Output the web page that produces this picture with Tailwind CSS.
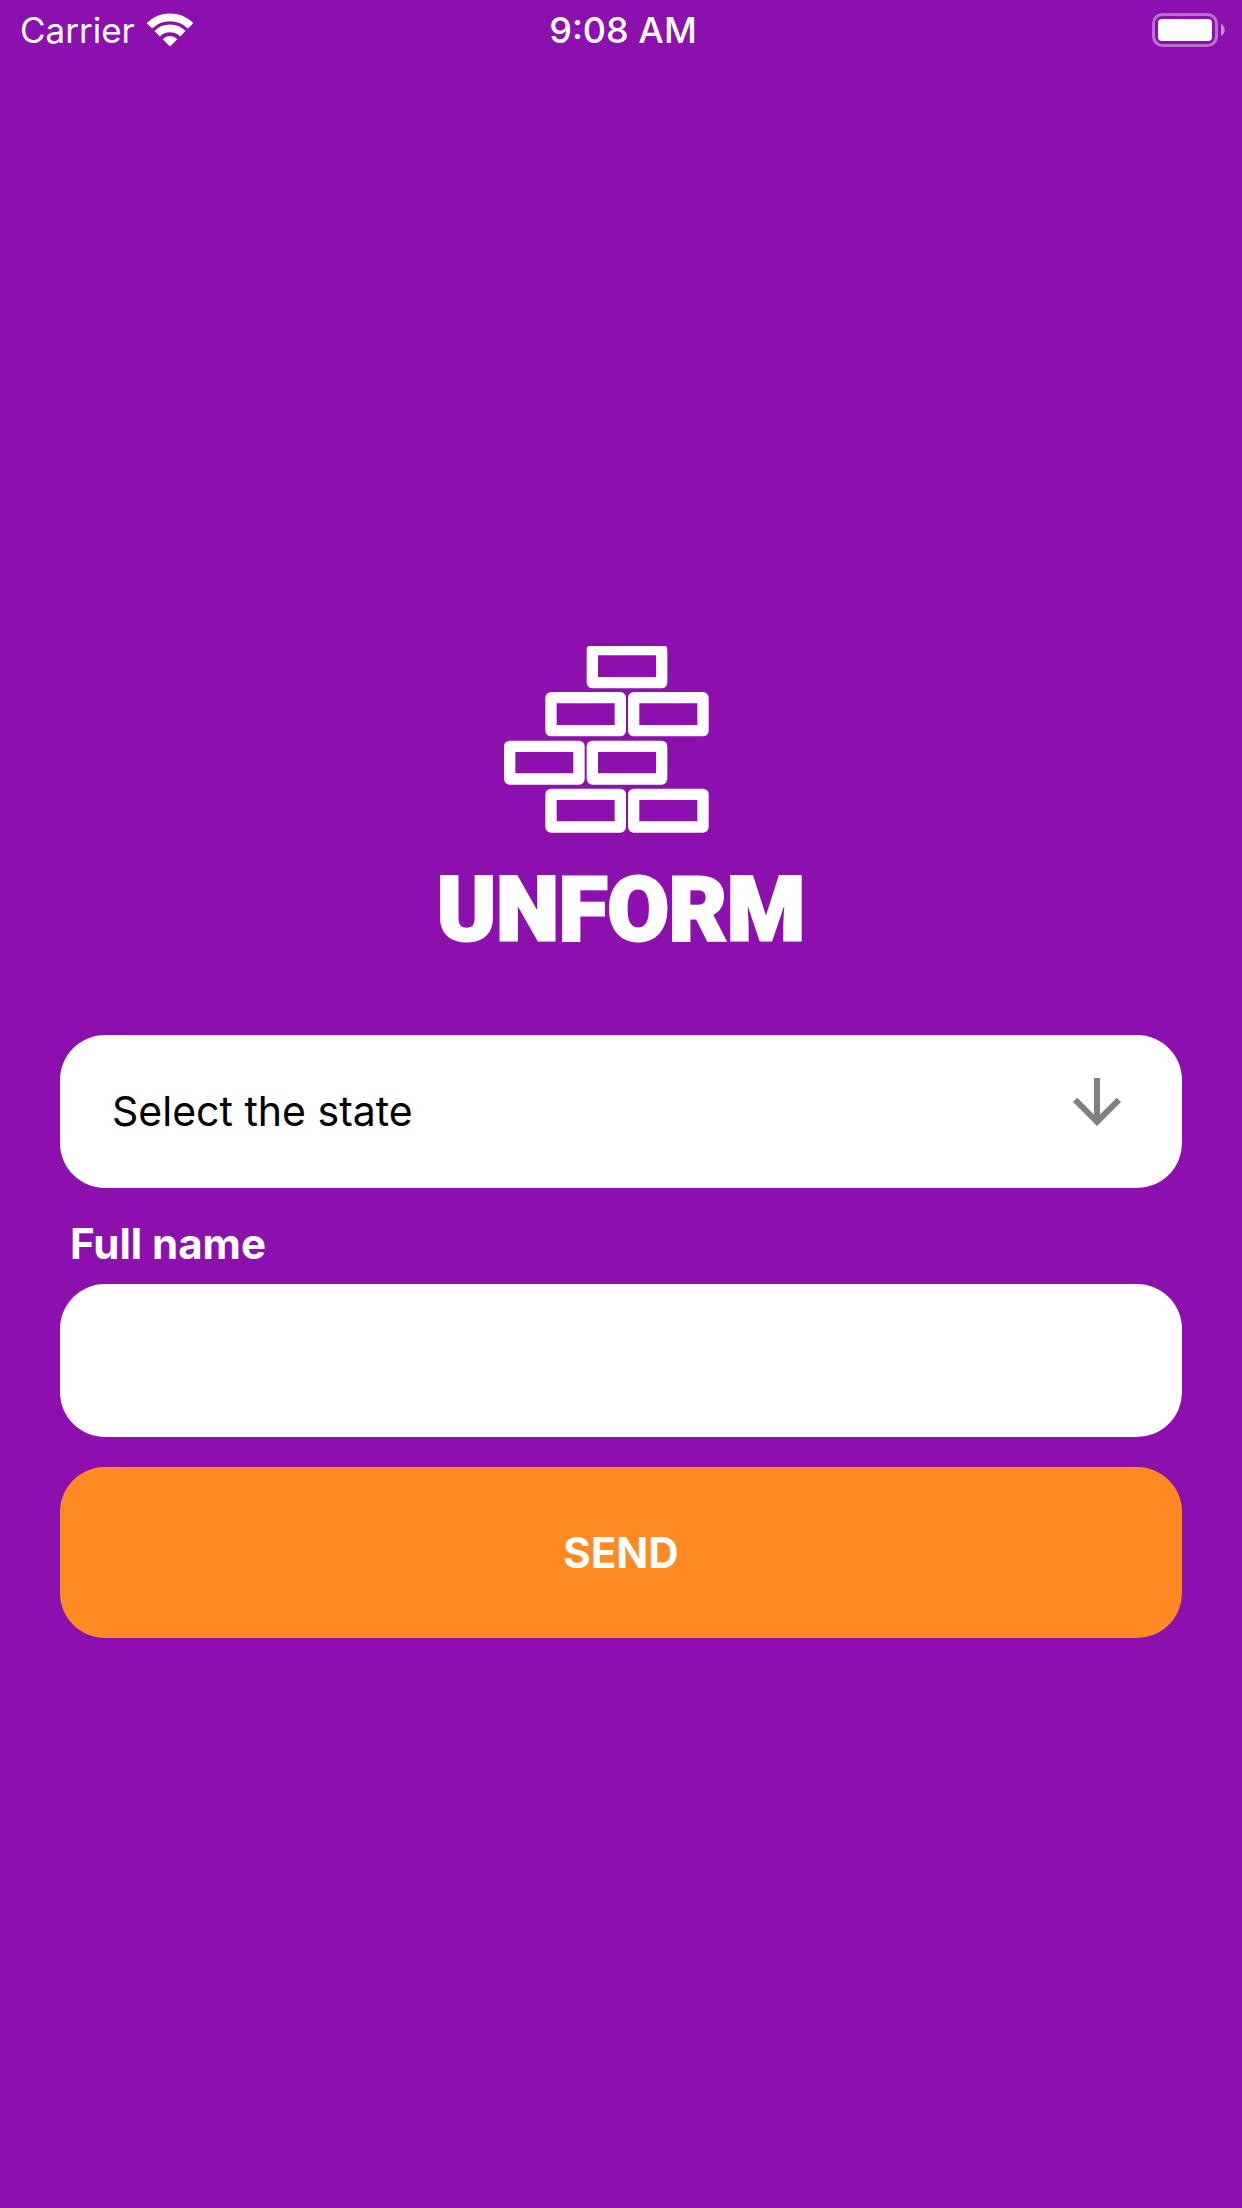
<!DOCTYPE html>
<html lang="en">
<head>
<meta charset="utf-8">
<meta name="viewport" content="width=device-width, initial-scale=1">
<title>Unform</title>
<script src="https://cdn.jsdelivr.net/npm/@tailwindcss/browser@4"></script>
</head>
<body class="flex min-h-screen flex-col bg-[#8c10ae] font-['Inter',sans-serif] text-white">
  <header class="grid h-[60px] grid-cols-3 items-center pr-4 pl-5 text-[36px] leading-[60px]">
    <div class="flex items-center gap-3">
      <span class="text-[35px]">Carrier</span>
      <svg class="h-[34px] w-[46px]" viewBox="447 38 138 101" fill="none" stroke="#fff" stroke-width="23" role="img" aria-label="Wi-Fi">
        <path d="M454.100 76.100A87.500 87.500 0 0 1 577.900 76.100"/>
        <path d="M477.500 99.500A54.500 54.500 0 0 1 554.500 99.500"/>
        <path d="M516 138L494 116A31 31 0 0 1 538 116Z" fill="#fff" stroke="none"/>
      </svg>
    </div>
    <time class="text-center font-medium">9:08 AM</time>
    <svg class="h-[34px] w-[74px] justify-self-end" viewBox="0 0 74 34" role="img" aria-label="Battery full">
      <rect x="1.500" y="1.500" width="63" height="31" rx="9" fill="none" stroke="#fff" stroke-opacity=".4" stroke-width="3"/>
      <rect x="6" y="6" width="54" height="22" rx="4" fill="#fff"/>
      <path d="M69 11C74 13 74 21 69 23Z" fill="#fff" fill-opacity=".5"/>
    </svg>
  </header>

  <main class="flex flex-1 flex-col items-center justify-center px-[60px] pt-4">
    <div class="flex w-[360px] flex-col items-center">
      <svg class="h-[187px] w-[360px]" viewBox="63 51 1080 561" fill="none" stroke="#fff" stroke-width="34" stroke-linejoin="round" aria-hidden="true">
        <rect x="517" y="62" width="208" height="99"/>
        <rect x="393" y="206" width="208" height="99"/>
        <rect x="641" y="206" width="208" height="99"/>
        <rect x="269" y="352" width="208" height="98"/>
        <rect x="517" y="352" width="208" height="98"/>
        <rect x="393" y="496" width="208" height="98"/>
        <rect x="641" y="496" width="208" height="98"/>
      </svg>
      <h1 class="mt-8 font-['Roboto',sans-serif] text-[89px] leading-[90px] font-black [-webkit-text-stroke:3px_white]">UNFORM</h1>
    </div>

    <form class="mt-20 flex w-full flex-col">
      <div class="relative">
        <select aria-label="State" class="block h-[153px] w-full appearance-none rounded-[45px] bg-white px-[52px] text-[41px] text-black">
          <option>Select the state</option>
        </select>
        <svg class="pointer-events-none absolute top-[31px] right-[49px] size-[72px]" viewBox="0 0 24 24" fill="#808080" aria-hidden="true">
          <path d="M20 12l-1.410-1.410L13 16.170V4h-2v12.170l-5.580-5.590L4 12l8 8 8-8z"/>
        </svg>
      </div>
      <label for="name" class="mt-7 px-[10px] text-[42px] leading-[56px] font-bold">Full name</label>
      <input id="name" type="text" class="mt-3 h-[153px] w-full rounded-[45px] bg-white px-[52px] text-[42px] text-black">
      <button type="submit" class="mt-[30px] h-[171px] w-full rounded-[45px] bg-[#ff8a23] text-[42px] font-bold">SEND</button>
    </form>
  </main>
</body>
</html>
